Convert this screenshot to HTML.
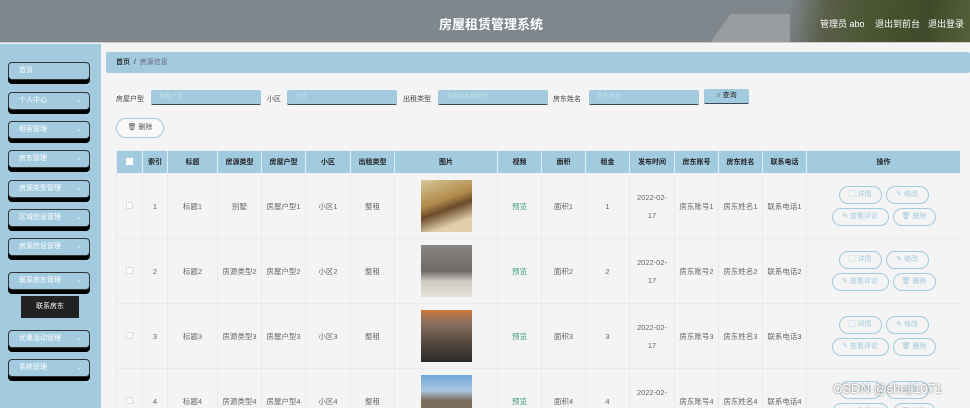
<!DOCTYPE html>
<html style="width:970px;height:408px;overflow:hidden"><head><meta charset="utf-8"><style>
*{margin:0;padding:0;box-sizing:border-box}
body{width:970px;height:408px;overflow:hidden;background:#f4f4f4;font-family:"Liberation Sans","Noto Sans CJK SC",sans-serif;color:#666}
#w{position:relative;width:970px;height:408px;overflow:hidden}
.hdr{position:absolute;left:0;top:0;width:970px;height:43px;background:#7f868c;overflow:hidden;border-bottom:1px solid #ccc}
.hdr .img{position:absolute;left:790px;top:0;width:180px;height:43px;background:linear-gradient(100deg,#7f868c 0%,#5a5f4a 20%,#4a5532 45%,#3f4a2a 75%,#55603a 100%)}
.hdr .road{position:absolute;left:720px;top:14px;width:130px;height:30px;background:#999da0;transform:skewX(-35deg)}
.title{position:absolute;left:0;width:982px;top:14px;text-align:center;color:#fff;font-weight:bold;font-size:13px}
.tr{position:absolute;top:17px;color:#fff;font-size:9px}
.side{position:absolute;left:0;top:44px;width:101px;height:364px;background:#a3cbdf}
.sb{position:absolute;left:8px;width:82px;height:18px;background:#a3cbdf;border:1px solid #333;border-radius:4px;box-shadow:0 4px 0 #000;color:#fff;font-size:7px;line-height:16px;padding-left:10px}
.sb i{position:absolute;right:7px;top:0;font-style:normal;font-size:7px;color:#eee}
.sub{position:absolute;left:21px;top:296px;width:58px;height:22px;background:#222;color:#fff;font-size:7px;line-height:22px;text-align:center}
.bc{position:absolute;left:106px;top:52px;width:864px;height:21px;background:#a3cbdf;border-radius:2px;font-size:7px;line-height:21px;padding-left:10px;color:#333}
.lbl{position:absolute;top:94px;font-size:7px;color:#444}
.inp{position:absolute;top:90px;height:15px;background:#a3cbdf;border-bottom:1px solid #3a4a55;border-radius:2px;font-size:6px;color:#c6dfea;padding-left:8px;line-height:14px}
.q{position:absolute;left:704px;top:89px;width:45px;height:15px;background:#a3cbdf;border-bottom:1px solid #3a4a55;border-radius:2px;font-size:7px;color:#222;text-align:center;line-height:14px}
.del{position:absolute;left:116px;top:118px;width:48px;height:20px;border:1px solid #a3cbdf;border-radius:10px;font-size:7px;color:#555;text-align:center;line-height:18px;background:#f8f8f8}
#tw{position:absolute;left:116px;top:150px;width:844px;height:258px;overflow:hidden}
table{border-collapse:collapse;table-layout:fixed;width:844px}
th{background:#a3cbdf;height:23px;font-size:7px;color:#222;border:1px solid #e6eef3;font-weight:bold}
td{height:65px;font-size:7.5px;color:#666;text-align:center;border:1px solid #e8ebee;background:#f4f4f4}
.cb{display:inline-block;width:7px;height:7px;border:1px solid #ddd;background:#fff}
th .cb{border-color:#fff}
.pic{width:51px;height:52px;margin:auto}
.g{color:#3a9a7a}
.ob{display:inline-block;height:18px;border:1.5px solid #a3cbdf;border-radius:9px;font-size:7px;color:#a3cbdf;line-height:15px;text-align:center;margin:2px 2px}
</style></head><body><div id="w">
<div class="hdr"><div class="road"></div><div class="img"></div>
<div class="title">房屋租赁管理系统</div>
<div class="tr" style="left:820px">管理员 abo</div><div class="tr" style="left:875px">退出到前台</div><div class="tr" style="left:928px">退出登录</div></div>
<div class="side">
<div class="sb" style="top:18px">首页</div>
<div class="sb" style="top:48px">个人中心<i>⌄</i></div>
<div class="sb" style="top:77px">租客管理<i>⌄</i></div>
<div class="sb" style="top:106px">房东管理<i>⌄</i></div>
<div class="sb" style="top:136px">房源类型管理<i>⌄</i></div>
<div class="sb" style="top:165px">区域信息管理<i>⌄</i></div>
<div class="sb" style="top:194px">房源信息管理<i>⌄</i></div>
<div class="sb" style="top:228px">联系房东管理<i>⌄</i></div>
<div class="sb" style="top:286px">优惠活动管理<i>⌄</i></div>
<div class="sb" style="top:315px">系统管理<i>⌄</i></div>
</div>
<div class="sub">联系房东</div>
<div class="bc"><b>首页</b> &nbsp;/&nbsp; <span style="color:#667">房源信息</span></div>
<div class="lbl" style="left:116px">房屋户型</div><div class="inp" style="left:151px;width:110px">房屋户型</div>
<div class="lbl" style="left:267px">小区</div><div class="inp" style="left:287px;width:110px">小区</div>
<div class="lbl" style="left:403px">出租类型</div><div class="inp" style="left:438px;width:110px">请选择出租类型</div>
<div class="lbl" style="left:553px">房东姓名</div><div class="inp" style="left:589px;width:110px">房东姓名</div>
<div class="q">○ 查询</div>
<div class="del">🗑 删除</div>
<div id="tw"><table>
<colgroup><col style="width:26px"><col style="width:25px"><col style="width:50px"><col style="width:44px"><col style="width:44px"><col style="width:45px"><col style="width:44px"><col style="width:103px"><col style="width:44px"><col style="width:44px"><col style="width:44px"><col style="width:45px"><col style="width:44px"><col style="width:44px"><col style="width:44px"><col style="width:154px"></colgroup>
<tr><th><span class="cb"></span></th><th>索引</th><th>标题</th><th>房源类型</th><th>房屋户型</th><th>小区</th><th>出租类型</th><th>图片</th><th>视频</th><th>面积</th><th>租金</th><th>发布时间</th><th>房东账号</th><th>房东姓名</th><th>联系电话</th><th>操作</th></tr>
<tr><td><span class="cb"></span></td><td>1</td><td>标题1</td><td>别墅</td><td>房屋户型1</td><td>小区1</td><td>整租</td><td><div class="pic" style="background:linear-gradient(160deg,#d8c79a,#b08a4a 40%,#6b4a2a 55%,#e0cfa8 80%)"></div></td><td class="g">预览</td><td>面积1</td><td>1</td><td>2022-02-<br><br>17</td><td>房东账号1</td><td>房东姓名1</td><td>联系电话1</td><td><span class="ob" style="width:43px">▢ 详情</span><span class="ob" style="width:43px">✎ 修改</span><br><span class="ob" style="width:57px">✎ 查看评论</span><span class="ob" style="width:43px">🗑 删除</span></td></tr>
<tr><td><span class="cb"></span></td><td>2</td><td>标题2</td><td>房源类型2</td><td>房屋户型2</td><td>小区2</td><td>整租</td><td><div class="pic" style="background:linear-gradient(180deg,#8a8580,#6f6a66 50%,#cfcbc4 70%,#e4e0da)"></div></td><td class="g">预览</td><td>面积2</td><td>2</td><td>2022-02-<br><br>17</td><td>房东账号2</td><td>房东姓名2</td><td>联系电话2</td><td><span class="ob" style="width:43px">▢ 详情</span><span class="ob" style="width:43px">✎ 修改</span><br><span class="ob" style="width:57px">✎ 查看评论</span><span class="ob" style="width:43px">🗑 删除</span></td></tr>
<tr><td><span class="cb"></span></td><td>3</td><td>标题3</td><td>房源类型3</td><td>房屋户型3</td><td>小区3</td><td>整租</td><td><div class="pic" style="background:linear-gradient(180deg,#c87a3a,#8a7060 25%,#5a4a40 60%,#2a2a2a)"></div></td><td class="g">预览</td><td>面积3</td><td>3</td><td>2022-02-<br><br>17</td><td>房东账号3</td><td>房东姓名3</td><td>联系电话3</td><td><span class="ob" style="width:43px">▢ 详情</span><span class="ob" style="width:43px">✎ 修改</span><br><span class="ob" style="width:57px">✎ 查看评论</span><span class="ob" style="width:43px">🗑 删除</span></td></tr>
<tr><td><span class="cb"></span></td><td>4</td><td>标题4</td><td>房源类型4</td><td>房屋户型4</td><td>小区4</td><td>整租</td><td><div class="pic" style="background:linear-gradient(180deg,#6ea6d8,#a9c6df 30%,#7a6a5a 50%,#8a7a6a)"></div></td><td class="g">预览</td><td>面积4</td><td>4</td><td>2022-02-<br><br>17</td><td>房东账号4</td><td>房东姓名4</td><td>联系电话4</td><td><span class="ob" style="width:43px">▢ 详情</span><span class="ob" style="width:43px">✎ 修改</span><br><span class="ob" style="width:57px">✎ 查看评论</span><span class="ob" style="width:43px">🗑 删除</span></td></tr>
</table></div>
<div style="position:absolute;left:833px;top:381px;font-size:13px;color:#fff;text-shadow:0 0 2px #555">CSDN @sheji1071</div>
</div></body></html>
